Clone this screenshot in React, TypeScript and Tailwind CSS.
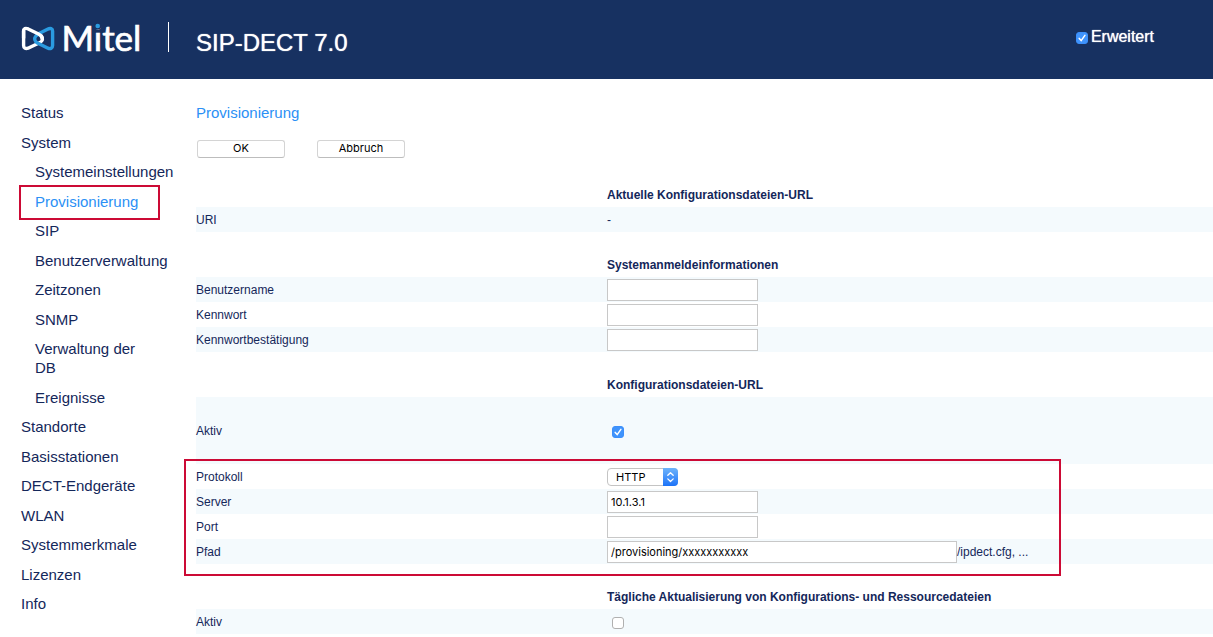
import { useState, type ReactNode } from "react";

const NAV: { label: string; sub?: boolean; active?: boolean }[] = [
  { label: "Status" },
  { label: "System" },
  { label: "Systemeinstellungen", sub: true },
  { label: "Provisionierung", sub: true, active: true },
  { label: "SIP", sub: true },
  { label: "Benutzerverwaltung", sub: true },
  { label: "Zeitzonen", sub: true },
  { label: "SNMP", sub: true },
  { label: "Verwaltung der DB", sub: true },
  { label: "Ereignisse", sub: true },
  { label: "Standorte" },
  { label: "Basisstationen" },
  { label: "DECT-Endgeräte" },
  { label: "WLAN" },
  { label: "Systemmerkmale" },
  { label: "Lizenzen" },
  { label: "Info" },
];

function Logo() {
  return (
    <svg viewBox="0 0 128 40" className="h-10 w-32 overflow-visible" role="img" aria-label="Mitel">
      <g fill="none" strokeWidth="3.4" strokeLinejoin="round" strokeLinecap="round">
        <path
          stroke="#ffffff"
          d="M3.600 12.500 V27.500 C3.600 30 5.500 31.200 8 30.200 L19.500 24.800 C22.800 23.200 23.400 20.200 21.500 18"
        />
        <path
          stroke="#2a9be0"
          d="M20 15 L27.500 11.200 C30.500 9.700 32.600 10.500 32.600 13 V27.500 C32.600 30.200 30.500 31.200 28 30.200 L17.500 25 C14.500 23.200 14 20.500 15.500 18.500 C16.500 16.700 18 16 20 15"
        />
        <path
          stroke="#ffffff"
          d="M3.600 20 V13 C3.600 10.500 5.500 9.700 8.200 10.900 L18.500 16 C20.500 17 22 18 22 20.500"
        />
      </g>
      <text
        x="41.500"
        y="32.500"
        fill="#ffffff"
        stroke="#ffffff"
        strokeWidth="0.700"
        fontSize="35"
        fontFamily="Lato, sans-serif"
      >
        Mitel
      </text>
      <circle cx="77.700" cy="8" r="3.700" fill="#173161" />
      <circle cx="77.700" cy="8" r="2.300" fill="#2a9be0" />
    </svg>
  );
}

function Check({ id, defaultChecked }: { id: string; defaultChecked?: boolean }) {
  const [on, setOn] = useState(!!defaultChecked);
  return (
    <span className="relative block size-3 shrink-0">
      <input
        id={id}
        type="checkbox"
        checked={on}
        onChange={(e) => setOn(e.target.checked)}
        className="block size-3 appearance-none rounded-[3px] border border-[#b0b0b0] bg-white checked:border-[#3b8ffb] checked:bg-[#3f93fc]"
      />
      {on && (
        <svg viewBox="0 0 12 12" className="pointer-events-none absolute inset-0 size-3" aria-hidden="true">
          <path d="M3.200 6.400 L5.200 8.600 L8.900 3.400" fill="none" stroke="#fff" strokeWidth="1.500" strokeLinecap="round" />
        </svg>
      )}
    </span>
  );
}

function Heading({ children }: { children: ReactNode }) {
  return <h2 className="ml-[411px] h-[25px] text-xs leading-[27px] font-bold">{children}</h2>;
}

function Row({
  label,
  id,
  shaded,
  tall,
  children,
}: {
  label: string;
  id?: string;
  shaded?: boolean;
  tall?: boolean;
  children: ReactNode;
}) {
  return (
    <div className={`flex items-center ${tall ? "h-[67px]" : "h-[25px]"} ${shaded ? "bg-[#f4fafd]" : ""}`}>
      {id ? (
        <label htmlFor={id} className="w-[411px] shrink-0">
          {label}
        </label>
      ) : (
        <span className="w-[411px] shrink-0">{label}</span>
      )}
      {children}
    </div>
  );
}

function Field({ id, value, wide, type }: { id: string; value?: string; wide?: boolean; type?: string }) {
  return (
    <input
      id={id}
      type={type ?? "text"}
      defaultValue={value}
      className={`h-[22px] border border-[#c8c8c8] bg-white px-[3px] font-[Inter,sans-serif] text-[11px] text-black ${
        wide ? "w-[350px]" : "w-[151px]"
      }`}
    />
  );
}

function PushButton({ children }: { children: ReactNode }) {
  return (
    <button
      type="button"
      className="h-[18px] w-[88px] rounded-[3px] border border-[#d4d4d4] border-b-[#bdbdbd] bg-white pb-0.5 text-center font-[Inter,sans-serif] text-[11px] leading-[14px] text-black"
    >
      {children}
    </button>
  );
}

export default function App() {
  return (
    <div className="bg-white font-['Liberation_Sans',Arial,sans-serif] text-[#14275a]">
      <header className="flex h-[79px] items-start bg-[#173161] pr-[59px] text-white">
        <div className="flex w-[196px] shrink-0 items-start pt-[18px] pl-5">
          <Logo />
          <span className="mt-1 ml-5 h-[30px] w-px bg-white" />
        </div>
        <h1 className="pt-[27px] text-2xl leading-8 [text-shadow:0_0_1px_#fff]">SIP-DECT 7.0</h1>
        <div className="mt-[27px] ml-auto flex items-center gap-[3px]">
          <span className="pt-0.5">
            <Check id="advanced" defaultChecked />
          </span>
          <label htmlFor="advanced" className="text-base leading-5 [text-shadow:0_0_1px_#fff]">
            Erweitert
          </label>
        </div>
      </header>

      <div className="flex items-start">
        <nav className="w-[196px] shrink-0 pt-6 pl-[21px]">
          <ul className="flex min-h-[510px] flex-col justify-between text-[15px] leading-[19px]">
            {NAV.map((item) => (
              <li key={item.label} className={`relative ${item.sub ? "ml-3.5 w-[120px]" : "w-[142px]"}`}>
                <a href="#" className={item.active ? "text-[#2b90f5]" : ""}>
                  {item.label}
                </a>
                {item.active && (
                  <span className="pointer-events-none absolute -top-[7px] -right-[5px] -bottom-[9px] -left-4 border-2 border-[#cc0a35]" />
                )}
              </li>
            ))}
          </ul>
        </nav>

        <main className="min-w-0 grow pt-6">
          <p className="text-[15px] leading-5 text-[#2b90f5]">Provisionierung</p>
          <form className="text-xs">
            <div className="mt-[17px] mb-6 ml-px flex gap-8">
              <PushButton>OK</PushButton>
              <PushButton>Abbruch</PushButton>
            </div>

            <section className="mb-5">
              <Heading>Aktuelle Konfigurationsdateien-URL</Heading>
              <Row label="URI" shaded>
                <span>-</span>
              </Row>
            </section>

            <section className="mb-5">
              <Heading>Systemanmeldeinformationen</Heading>
              <Row label="Benutzername" id="user" shaded>
                <Field id="user" />
              </Row>
              <Row label="Kennwort" id="password">
                <Field id="password" type="password" />
              </Row>
              <Row label="Kennwortbestätigung" id="confirm" shaded>
                <Field id="confirm" type="password" />
              </Row>
            </section>

            <section className="mb-5">
              <Heading>Konfigurationsdateien-URL</Heading>
              <Row label="Aktiv" id="url-active" shaded tall>
                <span className="pt-0.5 pl-[5px]">
                  <Check id="url-active" defaultChecked />
                </span>
              </Row>
              <div className="relative">
                <Row label="Protokoll" id="protocol">
                  <span className="relative block h-[18px] w-[71px]">
                    <select
                      id="protocol"
                      defaultValue="HTTP"
                      className="block h-[18px] w-full appearance-none rounded-[4px] border border-[#c4c4c4] bg-white pl-2 font-[Inter,sans-serif] text-[11px] leading-4 text-black"
                    >
                      <option>HTTP</option>
                      <option>HTTPS</option>
                      <option>FTP</option>
                      <option>TFTP</option>
                    </select>
                    <span className="pointer-events-none absolute inset-y-0 right-0 flex w-[15px] items-center justify-center rounded-r-[4px] bg-linear-to-b from-[#6db3fa] to-[#1a72f8]">
                      <svg viewBox="0 0 15 18" className="h-[18px] w-[15px]" aria-hidden="true">
                        <path
                          d="M4.800 7.300 L7.500 4.700 L10.200 7.300 M4.800 10.900 L7.500 13.500 L10.200 10.900"
                          fill="none"
                          stroke="#fff"
                          strokeWidth="1.300"
                          strokeLinecap="round"
                          strokeLinejoin="round"
                        />
                      </svg>
                    </span>
                  </span>
                </Row>
                <Row label="Server" id="server" shaded>
                  <Field id="server" value="10.1.3.1" />
                </Row>
                <Row label="Port" id="port">
                  <Field id="port" />
                </Row>
                <Row label="Pfad" id="path" shaded>
                  <Field id="path" value="/provisioning/xxxxxxxxxxx" wide />
                  <span>/ipdect.cfg, ...</span>
                </Row>
                <span className="pointer-events-none absolute -top-[5px] right-[152px] -bottom-3 -left-3 border-2 border-[#cc0a35]" />
              </div>
            </section>

            <section>
              <Heading>Tägliche Aktualisierung von Konfigurations- und Ressourcedateien</Heading>
              <Row label="Aktiv" id="daily-active" shaded>
                <span className="pt-0.5 pl-[5px]">
                  <Check id="daily-active" />
                </span>
              </Row>
            </section>
          </form>
        </main>
      </div>
    </div>
  );
}
